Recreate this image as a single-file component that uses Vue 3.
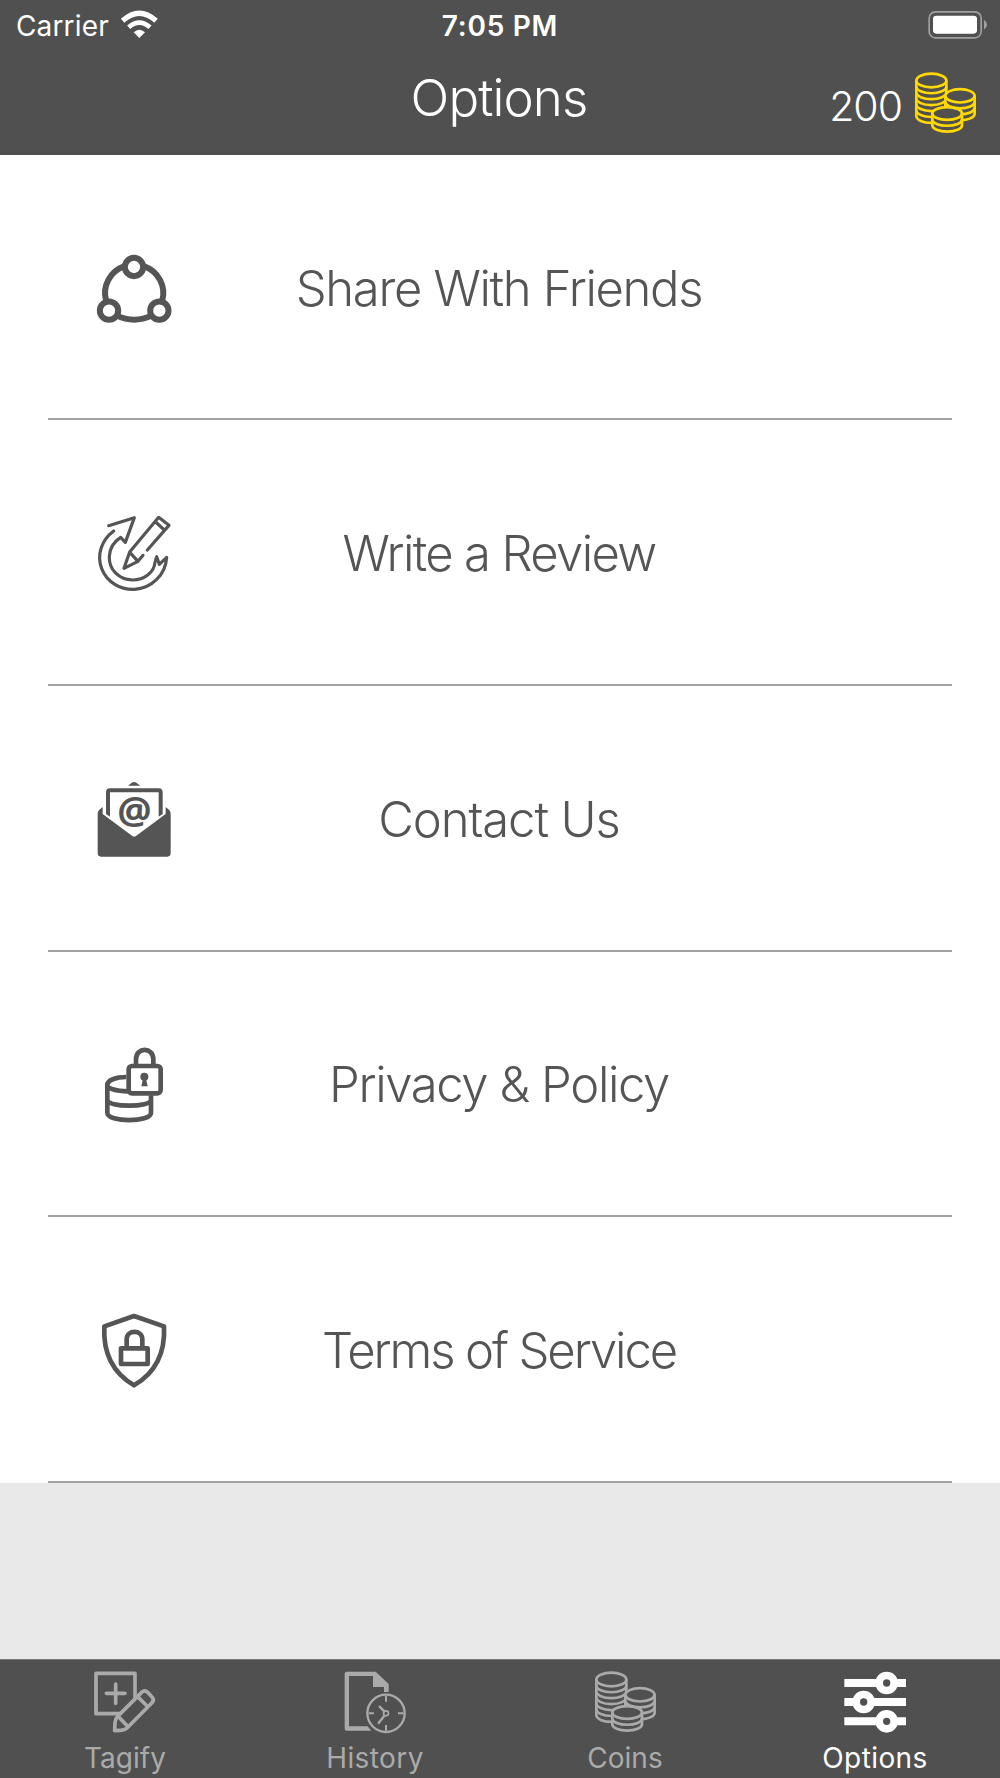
<script setup>
const rows = [
  { id: 'share', label: 'Share With Friends', box: '0 -9 330 300', spacing: '-1.33px' },
  { id: 'review', label: 'Write a Review', box: '0 9 330 300', spacing: '-1.65px' },
  { id: 'contact', label: 'Contact Us', box: '0 -3 330 300', spacing: '-1.1px' },
  { id: 'privacy', label: 'Privacy & Policy', box: '0 -4 330 300', spacing: '-1.38px' },
  { id: 'terms', label: 'Terms of Service', box: '0 0 330 300', spacing: '-2.1px' },
]
const tabs = [
  { id: 'tagify', label: 'Tagify', box: '276 87 198 198' },
  { id: 'history', label: 'History', box: '1026 87 198 198', spacing: '0.4px' },
  { id: 'coins', label: 'Coins', box: '336 209.5 198 198' },
  { id: 'options', label: 'Options', box: '1026 87 198 198', spacing: '0.4px', active: true },
]
const stacks = [
  { x: 349, y: 241, w: 90, r: 20.5, coins: 6 },
  { x: 436, y: 287, w: 88, r: 20, coins: 3 },
  { x: 397, y: 340, w: 89, r: 19, coins: 2 },
]
const step = 17.8
const body = (s) =>
  `M${s.x} ${s.y}a${s.w / 2} ${s.r} 0 0 1 ${s.w} 0v${s.coins * step}a${s.w / 2} ${s.r} 0 0 1 ${-s.w} 0z`
const rim = (s, n) => `M${s.x} ${s.y + n * step}a${s.w / 2} ${s.r} 0 0 0 ${s.w} 0`
</script>

<template>
  <div class="app">
    <svg class="defs" width="0" height="0">
      <symbol id="coin-stacks" viewBox="336 209.5 198 198">
        <g v-for="s in stacks" :key="s.x" fill="#505050" stroke="currentColor" stroke-width="8">
          <path :d="body(s)" />
          <path v-for="n in s.coins" :key="n" :d="rim(s, n - 1)" fill="none" />
        </g>
      </symbol>
    </svg>

    <header class="header">
      <div class="status">
        <div class="carrier">
          <span>Carrier</span>
          <svg class="wifi" viewBox="358 28 116 86" width="38.67" height="28.67">
            <g fill="none" stroke="#fff">
              <path d="M366 60Q416 15 466 60" stroke-width="16" />
              <path d="M384 80Q416 52 448 80" stroke-width="14" />
            </g>
            <path d="M399 95Q416 79 433 95L416 112z" fill="#fff" />
          </svg>
        </div>
        <span class="time">7:05 PM</span>
        <svg class="battery" viewBox="384 28 180 88" width="60" height="29.33">
          <rect x="387.500" y="33.500" width="156" height="78" rx="19" fill="none" stroke="#a0a0a0" stroke-width="5" />
          <rect x="399" y="45" width="132" height="54" rx="10" fill="#fff" />
          <path d="M552 57q9 6 9 15t-9 15z" fill="#a0a0a0" />
        </svg>
      </div>
      <div class="navbar">
        <h1>Options</h1>
        <div class="balance">
          <span>200</span>
          <svg class="gold" width="66" height="66"><use href="#coin-stacks" /></svg>
        </div>
      </div>
    </header>

    <main class="list">
      <div v-for="row in rows" :key="row.id" class="row">
        <svg class="row-icon" :viewBox="row.box" width="110" height="100" fill="none" stroke="#555" stroke-linecap="round" stroke-linejoin="round">
          <g v-if="row.id === 'share'" stroke-width="18">
            <path d="M132 76A85 85 0 0 0 78 178M193 76A85 85 0 0 1 247 178M109 223Q162 249 216 223" stroke-linecap="butt" />
            <circle cx="162" cy="78" r="27.500" />
            <circle cx="87" cy="209" r="27.500" />
            <circle cx="238" cy="209" r="27.500" />
          </g>
          <g v-else-if="row.id === 'review'" stroke-width="9.500">
            <path d="M101 93C65 120 49 164 65 206C81 247 121 270 164 268C215 265 257 224 260 172L238 193L230 170L225 187C222 218 192 240 158 240C116 239 86 208 88 169C89 144 102 125 122 112L136 127L163 53L86 77" />
            <path d="M202 150L267 76L236 52L149 156L132 205L174 184L189 166M150 158L174 184M227 66L253 90" />
          </g>
          <g v-else-if="row.id === 'contact'" stroke="none" fill="#555">
            <path d="M144 47L155 38Q162 34 169 38L181 47z" />
            <path d="M68 111V132L156 197Q162 202 169 197L257 132V111L267 119Q272 124 272 131V250Q272 260 262 260H63Q53 260 53 250V131Q53 124 58 119z" />
            <path d="M78 132V67Q78 55 90 55H236Q248 55 248 67V132L236 140V67H90V140z" />
            <text x="163" y="162" text-anchor="middle" class="at">@</text>
          </g>
          <g v-else-if="row.id === 'privacy'" stroke-width="14">
            <path d="M139 125C107 125 82 135 82 149V232C82 262 213 262 213 232V180M82 149C82 158 104 168 145 168M82 193C82 217 213 217 213 193" stroke-linecap="butt" />
            <rect x="146" y="92" width="96" height="82" rx="10" fill="#fff" />
            <path d="M168 90V72C168 34 220 34 220 72V90" />
            <circle cx="193" cy="124" r="12" fill="#555" stroke="none" />
            <path d="M189 130H198L203 153H184z" fill="#555" stroke="none" />
          </g>
          <g v-else stroke-width="14">
            <path d="M162 48L252 79C256 155 232 215 162 256C93 215 69 155 73 79z" />
            <path d="M123 145H203V192H123zM140 142V118C140 88 187 88 187 118V142" />
          </g>
        </svg>
        <span class="row-label" :style="{ letterSpacing: row.spacing }">{{ row.label }}</span>
      </div>
    </main>

    <nav class="tabs">
      <div v-for="tab in tabs" :key="tab.id" class="tab" :class="{ active: tab.active }">
        <svg v-if="tab.id === 'coins'" width="66" height="66"><use href="#coin-stacks" /></svg>
        <svg v-else :viewBox="tab.box" width="66" height="66" fill="none" stroke="currentColor">
          <g v-if="tab.id === 'tagify'" stroke-width="11" stroke-linejoin="round" stroke-linecap="round">
            <path d="M405 170V100H288V221H360M347 132V190M319 160H375" />
            <path d="M344 272L345 248Q346 236 353 229L425 157Q434 148 443 157L456 171Q464 179 456 188L384 261Q376 270 362 271z" fill="#505050" />
            <path d="M356 231L383 259M413 170L441 198" />
          </g>
          <g v-else-if="tab.id === 'history'">
            <path d="M1114 272H1040Q1034 272 1034 266V101Q1034 95 1040 95H1127L1166 132V156H1152V141H1119V108H1047V259H1103z" fill="currentColor" stroke="none" />
            <circle cx="1158" cy="220" r="56" stroke-width="7" />
            <circle cx="1158" cy="220" r="7.500" stroke-width="5" />
            <path d="M1158 168V185M1158 255V272M1106 220H1122M1194 220H1210" stroke-width="6" />
            <path d="M1139 200L1153 214M1136 249L1153 227" stroke-width="7" stroke-linecap="round" />
          </g>
          <g v-else>
            <path d="M1033 129H1218M1033 186H1218M1033 244H1218" stroke-width="24" />
            <g fill="#505050" stroke-width="23">
              <circle cx="1160" cy="129" r="22.500" />
              <circle cx="1091" cy="186" r="22.500" />
              <circle cx="1160" cy="244" r="22.500" />
            </g>
          </g>
        </svg>
        <span :style="{ letterSpacing: tab.spacing }">{{ tab.label }}</span>
      </div>
    </nav>
  </div>
</template>

<style>
body {
  margin: 0;
}
</style>

<style scoped>
.app {
  width: 1000px;
  height: 1778px;
  display: flex;
  flex-direction: column;
  overflow: hidden;
  background: #e9e9e9;
  font-family: Inter, 'Liberation Sans', sans-serif;
}
.defs {
  position: absolute;
}
svg {
  display: block;
  flex: none;
}
.header {
  height: 154.7px;
  flex: none;
  background: #505050;
  color: #fff;
}
.status {
  height: 50px;
  box-sizing: border-box;
  padding-top: 2px;
  display: grid;
  grid-template-columns: 1fr auto 1fr;
  align-items: center;
  font-size: 28px;
  line-height: 48px;
}
.carrier {
  display: flex;
  align-items: center;
  padding-left: 16px;
  letter-spacing: 0.15px;
}
.wifi {
  margin: -4px 0 0 11px;
}
.time {
  font-weight: 600;
  letter-spacing: 0.75px;
}
.battery {
  justify-self: end;
  margin: -3px 12px 0 0;
}
.navbar {
  height: 104.7px;
  display: grid;
  grid-template-columns: 1fr auto 1fr;
}
h1 {
  grid-column: 2;
  margin: 17px 1px 0 -1px;
  font-size: 51px;
  line-height: 62px;
  font-weight: 300;
  letter-spacing: -0.9px;
}
.balance {
  display: flex;
  justify-content: flex-end;
  align-items: flex-start;
  gap: 10px;
  padding: 20px 22px 0 0;
  font-size: 41px;
  font-weight: 300;
  line-height: 72px;
  letter-spacing: -1px;
}
.gold {
  color: #ffd800;
}
.list {
  flex: none;
  background: #fff;
}
.row {
  height: 265.67px;
  box-sizing: border-box;
  display: grid;
  grid-template-columns: 142px 620px 142px;
  align-items: center;
  margin: 0 48px;
  border-bottom: 2px solid #a2a2a2;
}
.row-icon {
  margin: 2px 0 0 32px;
}
.row-label {
  margin: 4px 1px 0 -1px;
  text-align: center;
  color: #555;
  font-size: 49px;
  font-weight: 300;
  line-height: 60px;
  white-space: nowrap;
}
.at {
  font: 700 115px 'Open Sans', sans-serif;
}
.tabs {
  margin-top: auto;
  height: 119px;
  box-sizing: border-box;
  border-top: 1px solid #777;
  display: grid;
  grid-template-columns: repeat(4, 1fr);
  background: #505050;
  color: #aaa;
}
.tab {
  display: flex;
  flex-direction: column;
  align-items: center;
  padding-top: 9px;
  font-size: 28px;
  line-height: 34px;
}
.tab span {
  margin-top: 6px;
}
.tab.active {
  color: #fff;
}
</style>
